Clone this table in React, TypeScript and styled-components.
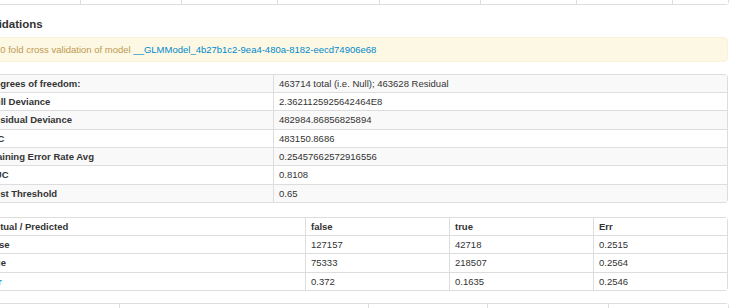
import React from 'react';
import styled, {createGlobalStyle} from "styled-components";


const GlobalStyle = createGlobalStyle`
  html, body {
    margin: 0;
    padding: 0;
    background: #ffffff;
    overflow: hidden;
  }

  body {
    font-family: "Liberation Sans", Arial, Helvetica, sans-serif;
    font-size: 9.5px;
    color: #333333;
  }
`

const modelKey = "__GLMModel_4b27b1c2-9ea4-480a-8182-eecd74906e68";

const stats: [string, string][] = [
    ["Degrees of freedom:", "463714 total (i.e. Null); 463628 Residual"],
    ["Null Deviance", "2.3621125925642464E8"],
    ["Residual Deviance", "482984.86856825894"],
    ["AIC", "483150.8686"],
    ["Training Error Rate Avg", "0.25457662572916556"],
    ["AUC", "0.8108"],
    ["Best Threshold", "0.65"],
];

const confusion: string[][] = [
    ["Actual / Predicted", "false", "true", "Err"],
    ["false", "127157", "42718", "0.2515"],
    ["true", "75333", "218507", "0.2564"],
    ["Err", "0.372", "0.1635", "0.2546"],
];

const App = () => {
    return (
        <>
            <GlobalStyle/>
            <Page>
                <Table $first>
                    <colgroup>
                        {[98, 101, 96, 102, 101, 96, 96, 56].map((w, i) => <col key={i} style={{width: w}}/>)}
                    </colgroup>
                    <tbody>
                    <tr>
                        {[0, 1, 2, 3, 4, 5, 6, 7].map(i => <Cell key={i}>&nbsp;</Cell>)}
                    </tr>
                    </tbody>
                </Table>

                <Heading>Validations</Heading>

                <Alert>
                    10 fold cross validation of model <Link href="#">{modelKey}</Link>
                </Alert>

                <Table>
                    <colgroup>
                        <col style={{width: 291}}/>
                        <col/>
                    </colgroup>
                    <tbody>
                    {stats.map(([label, value], i) => (
                        <tr key={label}>
                            <Cell $striped={i % 2 === 0} $bold>{label}</Cell>
                            <Cell $striped={i % 2 === 0}>{value}</Cell>
                        </tr>
                    ))}
                    </tbody>
                </Table>

                <Table $gap={14}>
                    <colgroup>
                        <col style={{width: 323}}/>
                        <col style={{width: 144}}/>
                        <col style={{width: 144}}/>
                        <col/>
                    </colgroup>
                    <tbody>
                    {confusion.map((row, r) => (
                        <tr key={r}>
                            {row.map((v, c) => (
                                <Cell key={c} $bold={r === 0 || c === 0}>
                                    {r === 3 && c === 0 ? <Link href="#">{v}</Link> : v}
                                </Cell>
                            ))}
                        </tr>
                    ))}
                    </tbody>
                </Table>

                <Table>
                    <colgroup>
                        {[137, 249, 119, 121, 120].map((w, i) => <col key={i} style={{width: w}}/>)}
                    </colgroup>
                    <tbody>
                    <tr>
                        {[0, 1, 2, 3, 4].map(i => <Cell key={i}>&nbsp;</Cell>)}
                    </tr>
                    </tbody>
                </Table>
            </Page>
        </>
    );
};

const Page = styled.div`
  width: 746px;
  margin: -14px 0 0 -18px;
`

const Heading = styled.h3`
  margin: 12px 0 0;
  font-size: 11.5px;
  line-height: 14px;
  font-weight: bold;
  color: #333333;
`

const Alert = styled.div`
  margin-top: 5.5px;
  padding: 5px 14px 5px 12px;
  line-height: 13px;
  background: #fcf8e3;
  border: 1px solid #fbf1dc;
  border-radius: 4px;
  color: #c09853;
`

const Link = styled.a`
  color: #0088cc;
  text-decoration: none;
`

const Table = styled.table<{ $gap?: number, $first?: boolean }>`
  width: 100%;
  margin-top: ${p => p.$first ? 0 : (p.$gap ?? 12)}px;
  table-layout: fixed;
  border-collapse: separate;
  border-spacing: 0;
  border: 1px solid #dddddd;
  border-left: 0;
  border-radius: 4px;

  tr:first-child td {
    border-top: 0;
  }
`

const Cell = styled.td<{ $striped?: boolean, $bold?: boolean }>`
  padding: 3px 5px;
  line-height: 11.3px;
  border-top: 1px solid #dddddd;
  border-left: 1px solid #dddddd;
  background: ${p => p.$striped ? '#f9f9f9' : '#ffffff'};
  font-weight: ${p => p.$bold ? 'bold' : 'normal'};
  white-space: nowrap;
  overflow: hidden;
  text-align: left;
`

export default App;
